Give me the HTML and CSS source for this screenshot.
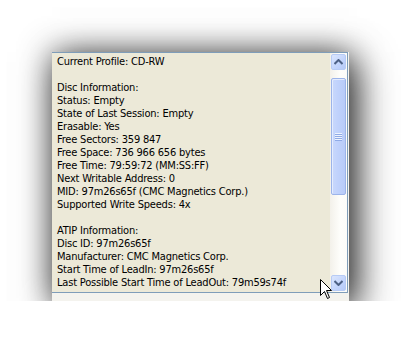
FILE: index.html
```html
<!DOCTYPE html>
<html>
<head>
<meta charset="utf-8">
<link rel="stylesheet" href="styles.css">
</head>
<body>
<div class="frame">
  <div class="field">
    <div class="text">Current Profile: CD-RW

Disc Information:
Status: Empty
State of Last Session: Empty
Erasable: Yes
Free Sectors: 359 847
Free Space: 736 966 656 bytes
Free Time: 79:59:72 (MM:SS:FF)
Next Writable Address: 0
MID: 97m26s65f (CMC Magnetics Corp.)
Supported Write Speeds: 4x

ATIP Information:
Disc ID: 97m26s65f
Manufacturer: CMC Magnetics Corp.
Start Time of LeadIn: 97m26s65f
Last Possible Start Time of LeadOut: 79m59s74f</div>
    <div class="scrollbar">
      <div class="btn">
        <svg width="9" height="6" viewBox="0 0 9 6"><path d="M0.5 5 L4.5 1 L8.5 5" fill="none" stroke="#4d6185" stroke-width="2"/></svg>
      </div>
      <div class="track">
        <div class="thumb">
          <div class="grip"><span></span><span></span><span></span><span></span></div>
        </div>
      </div>
      <div class="btn">
        <svg width="9" height="6" viewBox="0 0 9 6"><path d="M0.5 1 L4.5 5 L8.5 1" fill="none" stroke="#4d6185" stroke-width="2"/></svg>
      </div>
    </div>
  </div>
  <svg class="cursor" width="13" height="21" viewBox="0 0 13 21"><path d="M0.5 0.5 L0.5 16.5 L4.5 12.5 L7.5 19.5 L9.5 18.5 L6.5 11.5 L11.5 11.5 Z" fill="#fff" stroke="#000" stroke-width="1"/></svg>
</div>
</body>
</html>
```
FILE: styles.css
```css
html, body {
  margin: 0;
  padding: 0;
  background: #ffffff;
}
body {
  padding: 52px 0 0 52px;
}
.frame {
  position: relative;
  width: 297px;
  height: 249px;
  background: #f4f3ee;
  box-shadow: 0 0 30px rgba(0, 0, 0, 0.5), 8px 10px 36px rgba(0, 0, 0, 0.7);
}
.field {
  display: flex;
  height: 239px;
  width: 295px;
  border-top: 1px solid #7f9db9;
  border-right: 1px solid #7f9db9;
  border-bottom: 1px solid #7f9db9;
  background: #ece9d8;
}
.text {
  flex: 1;
  padding: 2px 0 0 5px;
  font-family: "DejaVu Sans Condensed", "DejaVu Sans", sans-serif;
  font-size: 11px;
  letter-spacing: -0.2px;
  line-height: 13px;
  color: #000;
  white-space: pre;
  overflow: hidden;
}
.scrollbar {
  width: 17px;
  display: flex;
  flex-direction: column;
  background: linear-gradient(to right, #f3f1ea, #fefefb 60%, #fcfcf9);
}
.btn {
  margin: 1px;
  border: 1px solid #b7cbf5;
  border-radius: 2px;
  background: linear-gradient(135deg, #dbe6fe, #c2d4fc 60%, #b5c9f7);
  display: flex;
  align-items: center;
  justify-content: center;
  box-sizing: border-box;
  height: 16px;
}
.track {
  flex: 1;
  padding-top: 7px;
}
.thumb {
  margin: 0 1px;
  height: 117px;
  box-sizing: border-box;
  border: 1px solid #9cb4ea;
  border-radius: 2px;
  background: linear-gradient(to right, #c9d8fc, #bfd1fc 50%, #b8cbf8);
  box-shadow: inset 1px 1px 0 #e4ecfe;
  display: flex;
  align-items: center;
  justify-content: center;
}
.grip {
  display: flex;
  flex-direction: column;
  gap: 1px;
}
.grip span {
  display: block;
  width: 7px;
  height: 1px;
  background: #eef3fe;
  box-shadow: 0 1px 0 #8faae6;
}
.cursor {
  position: absolute;
  left: 268px;
  top: 227px;
}
```
